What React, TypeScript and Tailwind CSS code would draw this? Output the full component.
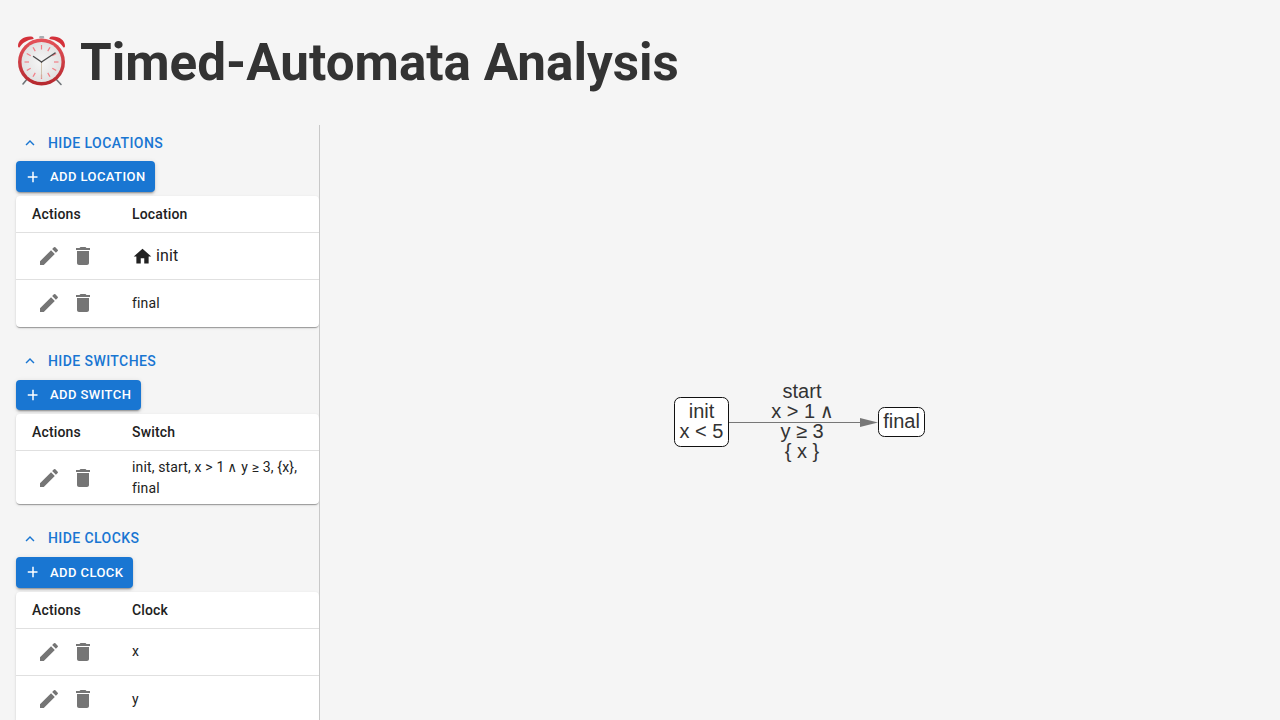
import type { ReactNode } from 'react';

const ICONS = {
    edit: 'M3 17.25V21h3.75L17.81 9.94l-3.75-3.75L3 17.25zM20.71 7.04c.39-.39.39-1.02 0-1.41l-2.34-2.34a.9959.9959 0 0 0-1.41 0l-1.83 1.83 3.75 3.75 1.83-1.83z',
    trash: 'M6 19c0 1.1.9 2 2 2h8c1.1 0 2-.9 2-2V7H6v12zM19 4h-3.5l-1-1h-5l-1 1H5v2h14V4z',
    home: 'M10 20v-6h4v6h5v-8h3L12 3 2 12h3v8z',
    less: 'M12 8l-6 6 1.41 1.41L12 10.83l4.59 4.58L18 14z',
    add: 'M19 13h-6v6h-2v-6H5v-2h6V5h2v6h5v2z',
};

function Icon({ name, className }: { name: keyof typeof ICONS; className: string }) {
    return (
        <svg viewBox="0 0 24 24" fill="currentColor" className={className}>
            <path d={ICONS[name]} />
        </svg>
    );
}

function AlarmClock() {
    const ticks = [0, 30, 60, 90, 120, 150, 180, 210, 240, 270, 300, 330];
    return (
        <svg viewBox="0 0 52 52" className="mb-[6px] h-[52px] w-[52px] shrink-0">
            <defs>
                <radialGradient id="face" cx="50%" cy="50%" r="50%">
                    <stop offset="0%" stopColor="#f6f6f6" />
                    <stop offset="100%" stopColor="#e2e2e2" />
                </radialGradient>
                <linearGradient id="rim" x1="0" y1="0" x2="0" y2="1">
                    <stop offset="0%" stopColor="#e5535a" />
                    <stop offset="100%" stopColor="#b5282e" />
                </linearGradient>
            </defs>
            <path d="M13 43 L8 49 M40 43 L46 49.500" stroke="#6f7478" strokeWidth="1.600" strokeLinecap="round" />
            <rect x="24.200" y="1" width="5" height="2.500" rx="1" fill="#a9adb2" />
            <path d="M3 11 C3 5 9 1 16 1.500 C18 1.700 19 3 18.500 4 C12 5 7 8 4.500 12.500 C3.700 12.500 3 12 3 11 Z" fill="#d4313a" />
            <path d="M50 11 C50 5 44 1 37 1.500 C35 1.700 34 3 34.500 4 C41 5 46 8 48.500 12.500 C49.300 12.500 50 12 50 11 Z" fill="#d4313a" />
            <circle cx="26.500" cy="27" r="23.500" fill="url(#rim)" />
            <circle cx="26.500" cy="27" r="20" fill="url(#face)" />
            {ticks.map((a) => (
                <line
                    key={a}
                    x1="26.500"
                    y1="10"
                    x2="26.500"
                    y2="14.500"
                    stroke="#f27e86"
                    strokeWidth="1.200"
                    transform={`rotate(${a} 26.500 27)`}
                />
            ))}
            <line x1="26.500" y1="27" x2="26.500" y2="43" stroke="#c9b8a0" strokeWidth="0.800" />
            <line x1="26.500" y1="27" x2="18.500" y2="21.500" stroke="#4a4a4a" strokeWidth="1.400" strokeLinecap="round" />
            <line x1="26.500" y1="27" x2="40" y2="18" stroke="#4a4a4a" strokeWidth="1.400" strokeLinecap="round" />
        </svg>
    );
}

function Row({ children, tall }: { children: ReactNode; tall?: boolean }) {
    return (
        <div className={`flex items-center border-b border-[#e0e0e0] last:border-b-0 ${tall ? 'h-[53px]' : 'h-[47px]'}`}>
            <div className="flex w-[116px] shrink-0 gap-[10px] pl-[21px] text-[#757575]">
                <Icon name="edit" className="h-6 w-6" />
                <Icon name="trash" className="h-6 w-6" />
            </div>
            <div className="min-w-0 pr-4 pb-px text-[14px] leading-[20px] tracking-[0.15px] text-[#212121]">{children}</div>
        </div>
    );
}

function Section({
    hide,
    add,
    column,
    addWidth,
    children,
}: {
    hide: string;
    add: string;
    column: string;
    addWidth: string;
    children: ReactNode;
}) {
    return (
        <section className="pb-[18.650px]">
            <div className="flex h-[30.750px] items-center pt-px pl-[5px] text-[14px] font-[475] tracking-[0.42px] text-[#1976d2]">
                <Icon name="less" className="mr-[9px] h-[18px] w-[18px]" />
                {hide}
            </div>
            <div
                className={`mt-[3.250px] flex h-[30.750px] items-center rounded bg-[#1976d2] pl-[8px] text-[13px] font-[475] tracking-[0.42px] text-white shadow-[0_3px_1px_-2px_rgba(0,0,0,0.2),0_2px_2px_0_rgba(0,0,0,0.14),0_1px_5px_0_rgba(0,0,0,0.12)] ${addWidth}`}
            >
                <Icon name="add" className="mr-[8px] h-[18px] w-[18px]" />
                {add}
            </div>
            <div className="mt-1 rounded bg-white shadow-[0_2px_1px_-1px_rgba(0,0,0,0.2),0_1px_1px_0_rgba(0,0,0,0.14),0_1px_3px_0_rgba(0,0,0,0.12)]">
                <div className="flex h-[37px] items-center border-b border-[#e0e0e0] pt-px text-[14px] font-[475] tracking-[0.15px] text-[#212121]">
                    <div className="w-[116px] shrink-0 pl-4">Actions</div>
                    <div>{column}</div>
                </div>
                {children}
            </div>
        </section>
    );
}

function Graph() {
    return (
        <svg width="256" height="84" viewBox="3 2 256 84">
            <g fontFamily='"Liberation Sans", Arial, sans-serif' fontSize="20" textAnchor="middle" fill="#333333">
                <rect x="5.500" y="18.500" width="54" height="49" rx="6" fill="#ffffff" stroke="#111111" />
                <rect x="209.500" y="28.500" width="46" height="29" rx="6" fill="#ffffff" stroke="#111111" />
                <line x1="60" y1="43.500" x2="192" y2="43.500" stroke="#777777" />
                <path d="M191 39 L209 43.500 L191 48 Z" fill="#777777" />
                <text x="32.500" y="39">init</text>
                <text x="32.500" y="59">x &lt; 5</text>
                <text x="232.500" y="49">final</text>
                <text x="133" y="19">start</text>
                <text x="133" y="39">
                    x &gt; 1 <tspan fontFamily='"Liberation Mono", monospace'>∧</tspan>
                </text>
                <text x="133" y="59">y ≥ 3</text>
                <text x="133" y="79">{'{ x }'}</text>
            </g>
        </svg>
    );
}

export default function App() {
    return (
        <div className="flex h-screen flex-col overflow-hidden bg-[#f5f5f5] font-['Roboto',sans-serif]">
            <h1 className="flex h-[125px] shrink-0 items-center gap-[13px] pt-[2px] pl-[15px] text-[51.200px] font-bold text-[#333333]">
                <AlarmClock />
                Timed-Automata Analysis
            </h1>
            <div className="flex min-h-0 flex-1">
                <aside className="w-[320px] shrink-0 overflow-hidden border-r border-[#c8c8c8] pt-[2.200px] pl-4">
                    <Section hide="HIDE LOCATIONS" add="ADD LOCATION" column="Location" addWidth="w-[139px]">
                        <Row>
                            <span className="flex items-center gap-[3px] pt-[2px] text-[16px]">
                                <Icon name="home" className="h-[21px] w-[21px] text-[#212121]" />
                                init
                            </span>
                        </Row>
                        <Row>final</Row>
                    </Section>
                    <Section hide="HIDE SWITCHES" add="ADD SWITCH" column="Switch" addWidth="w-[125px]">
                        <Row tall>
                            init, start, x &gt; 1 <span className="mr-px font-['Liberation_Mono',monospace]">∧</span> y ≥ 3, {'{x}'}, final
                        </Row>
                    </Section>
                    <Section hide="HIDE CLOCKS" add="ADD CLOCK" column="Clock" addWidth="w-[117px]">
                        <Row>x</Row>
                        <Row>y</Row>
                    </Section>
                </aside>
                <main className="flex flex-1 items-center justify-center">
                    <Graph />
                </main>
            </div>
        </div>
    );
}
